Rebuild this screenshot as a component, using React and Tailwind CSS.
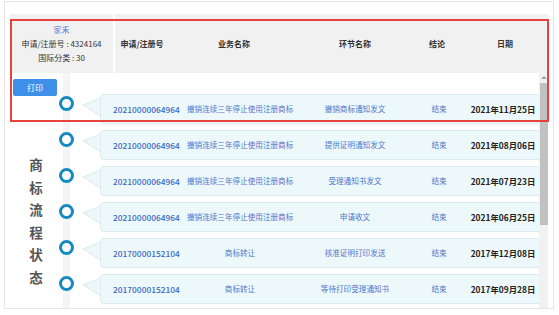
import React from "react";

const rows = [
  { no: "20210000064964", biz: "撤销连续三年停止使用注册商标", step: "撤销商标通知发文", result: "结束", date: "2021年11月25日" },
  { no: "20210000064964", biz: "撤销连续三年停止使用注册商标", step: "提供证明通知发文", result: "结束", date: "2021年08月06日" },
  { no: "20210000064964", biz: "撤销连续三年停止使用注册商标", step: "受理通知书发文", result: "结束", date: "2021年07月23日" },
  { no: "20210000064964", biz: "撤销连续三年停止使用注册商标", step: "申请收文", result: "结束", date: "2021年06月25日" },
  { no: "20170000152104", biz: "商标转让", step: "核准证明打印发送", result: "结束", date: "2017年12月08日" },
  { no: "20170000152104", biz: "商标转让", step: "等待打印受理通知书", result: "结束", date: "2017年09月28日" },
];

function Row({ r }) {
  return (
    <div className="flex h-[36px]">
      <div className="w-[24px] flex justify-start pt-[2px]">
        <div className="w-[15px] h-[15px] rounded-full border-[3px] border-[#168ac2] bg-white relative z-10" />
      </div>
      <svg width="18" height="30" className="shrink-0">
        <polygon points="0,11 18,4 18,22" fill="#eef8fa" stroke="#dbe8ec" strokeWidth="1" />
      </svg>
      <div className="flex items-center h-[30px] w-[460px] shrink-0 bg-[#edf8fa] border border-[#dcebef] rounded-[4px] -ml-[1px] text-[7.6px] text-[#5276cc] whitespace-nowrap">
        <div className="w-[86px] pl-[12px] text-[8.4px] font-medium text-[#3f68c2]">{r.no}</div>
        <div className="w-[106px] text-center">{r.biz}</div>
        <div className="w-[124px] text-center">{r.step}</div>
        <div className="w-[44px] text-center">{r.result}</div>
        <div className="w-[84px] text-center text-[8.4px] font-bold text-[#222]">{r.date}</div>
      </div>
    </div>
  );
}

export default function App() {
  return (
    <div className="w-[559px] h-[315px] bg-white pt-[1px] pl-[4px] font-['Noto_Sans_CJK_SC',sans-serif] relative">
      <div className="w-[550px] h-[308px] border border-[#e6e6e6] pt-[12px] px-[5px] flex flex-col">
        {/* header */}
        <div className="flex h-[59px] shrink-0 gap-[2px]">
          <div className="w-[103px] bg-[#f1f1f1] flex flex-col items-center justify-center text-[8px] leading-[14px] text-[#333]">
            <div className="text-[#5b7fd0]">家禾</div>
            <div>申请/注册号 : 4324164</div>
            <div>国际分类 : 30</div>
          </div>
          <div className="flex-1 bg-[#f1f1f1] flex items-center text-[8px] font-bold text-[#333] whitespace-nowrap">
            <div className="w-[54px] text-center">申请/注册号</div>
            <div className="w-[130px] text-center">业务名称</div>
            <div className="w-[112px] text-center">环节名称</div>
            <div className="w-[52px] text-center">结论</div>
            <div className="w-[84px] text-center">日期</div>
          </div>
        </div>

        {/* body */}
        <div className="flex flex-1 min-h-0">
          <div className="flex flex-1 overflow-hidden">
            <div className="w-[49px] shrink-0 flex flex-col pl-[3px] pt-[6px]">
              <button className="w-[44px] h-[17px] bg-[#3d8fe8] rounded-[2px] text-white text-[8px]">打印</button>
              <div className="mt-[57px] w-[46px] flex flex-col items-center text-[13.5px] leading-[22.6px] font-bold text-[#555]">
                <span>商</span>
                <span>标</span>
                <span>流</span>
                <span>程</span>
                <span>状</span>
                <span>态</span>
              </div>
            </div>
            <div className="relative flex-1 pt-[21px]">
              <div className="absolute left-[4px] top-0 bottom-0 w-[7px] bg-[#f4f4f4]" />
              {rows.map((r, i) => (
                <Row key={i} r={r} />
              ))}
            </div>
          </div>
          <div className="w-[9px] shrink-0 bg-[#f1f1f1] flex flex-col items-center">
            <div className="mt-[3px] w-0 h-0 border-l-[3px] border-r-[3px] border-b-[3px] border-l-transparent border-r-transparent border-b-[#a3a3a3]" />
            <div className="mt-[4px] w-[8px] h-[142px] bg-[#c1c1c1]" />
          </div>
        </div>
      </div>

      {/* red highlight */}
      <div className="absolute left-[10px] top-[19px] w-[539px] h-[103px] border-2 border-[#e8413e] pointer-events-none" />
    </div>
  );
}
